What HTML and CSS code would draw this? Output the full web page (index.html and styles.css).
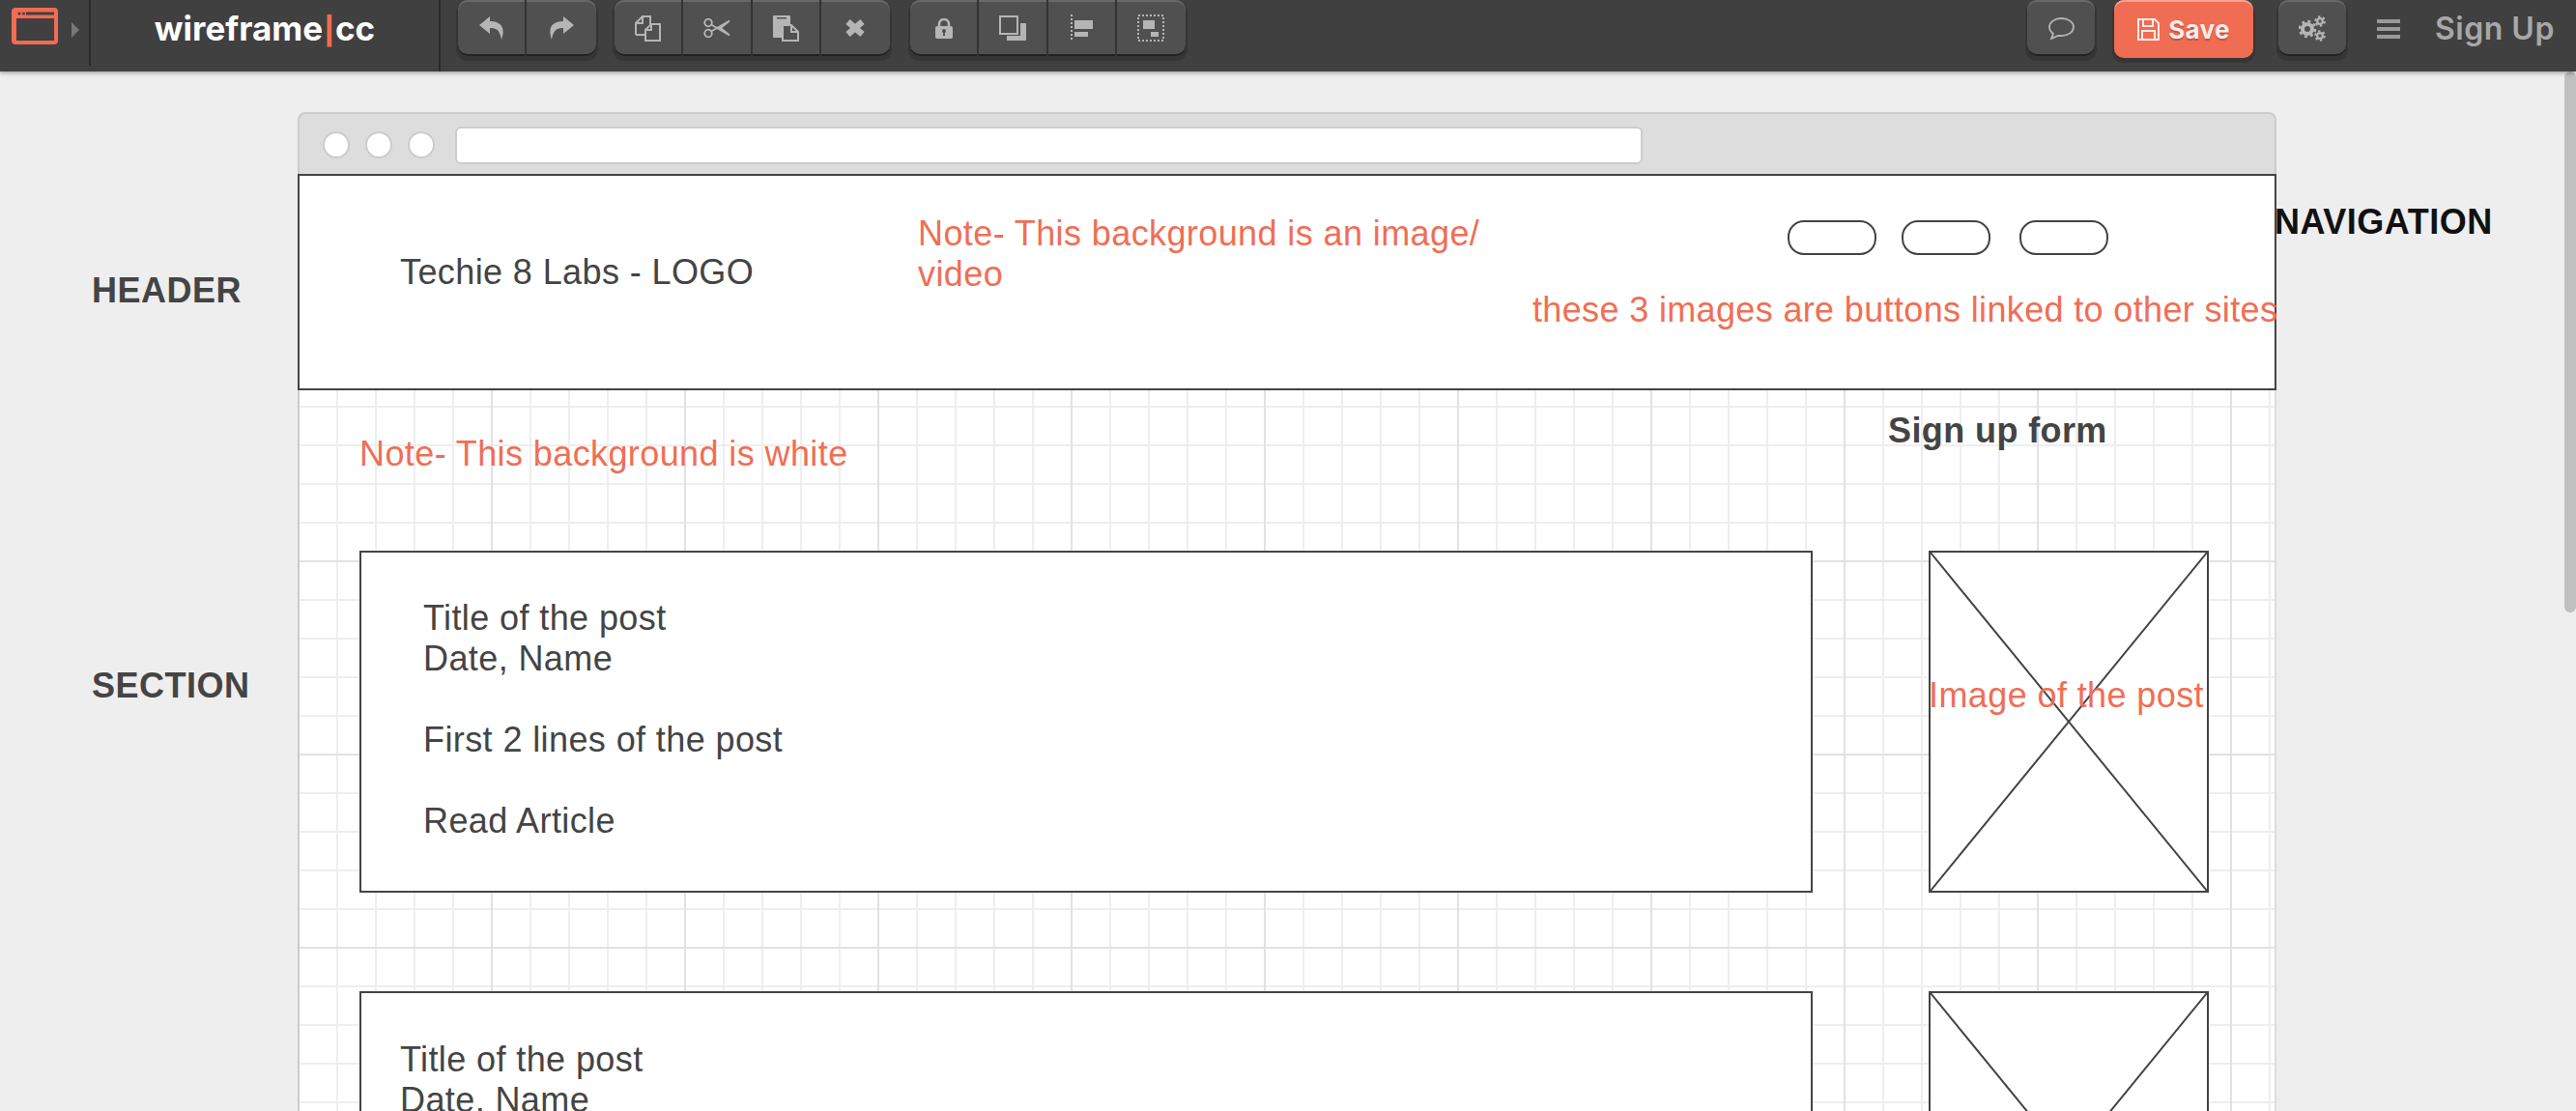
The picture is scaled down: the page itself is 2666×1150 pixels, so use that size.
FILE: index.html
```html
<!DOCTYPE html>
<html lang="en">
<head>
    <meta charset="UTF-8">
    <title>wireframe.cc</title>
    <link rel="stylesheet" href="styles.css">
</head>
<body>

    <!-- Top toolbar -->
    <header class="toolbar">
        <div class="logo-cell">
            <svg class="logo-icon" width="48" height="38" viewBox="0 0 48 38">
                <rect width="48" height="38" rx="4" fill="#f06c52"/>
                <circle cx="8" cy="6" r="1.6" fill="#404040"/>
                <circle cx="12.5" cy="6" r="1.6" fill="#404040"/>
                <rect x="15" y="4.5" width="29" height="3" fill="#404040"/>
                <rect x="5" y="11" width="39" height="23" fill="#404040"/>
            </svg>
            <span class="logo-caret"></span>
        </div>
        <div class="brand">wireframe<span class="brand-pipe">|</span>cc</div>

        <div class="btn-group first-group">
            <div class="btn">
                <svg width="26" height="24" viewBox="0 0 26 24"><path d="M11 0 0 9l11 9v-6c7-.5 10.500 3 12 12 4-11 1-19-12-19z" fill="#b5b5b5"/></svg>
            </div>
            <div class="btn">
                <svg width="26" height="24" viewBox="0 0 26 24"><path d="M15 0l11 9-11 9v-6C8 11.500 4.500 15 3 24-1 13 2 5 15 5z" fill="#b5b5b5"/></svg>
            </div>
        </div>

        <div class="btn-group edit-group">
            <div class="btn">
                <svg width="27" height="27" viewBox="0 0 27 27" fill="none" stroke="#b5b5b5" stroke-width="2"><path d="M1 20V8l7-7h8v8M8 1v7H1M1 20h10"/><path d="M11 26h15V9h-9l-6 6zM17 9v6h-6"/></svg>
            </div>
            <div class="btn">
                <svg width="28" height="20" viewBox="0 0 28 20" fill="none" stroke="#b5b5b5" stroke-width="1.800"><circle cx="5" cy="4.500" r="3.800"/><circle cx="5" cy="15.500" r="3.800"/><path d="M8 6.500l19 11-11-9M8 13.500l19-11-11 9"/></svg>
            </div>
            <div class="btn">
                <svg width="27" height="27" viewBox="0 0 27 27"><rect width="18" height="23" rx="1" fill="#b5b5b5"/><rect x="4" y="2" width="10" height="1.500" fill="#505050"/><path d="M10 10h9l7 7v9H10z" fill="#505050" stroke="#b5b5b5" stroke-width="2"/><path d="M19 10v7h7" fill="none" stroke="#b5b5b5" stroke-width="2"/></svg>
            </div>
            <div class="btn">
                <svg width="20" height="18" viewBox="0 0 20 18"><path d="M2.500 2.500l15 13M17.500 2.500l-15 13" stroke="#b5b5b5" stroke-width="6.500"/></svg>
            </div>
        </div>

        <div class="btn-group">
            <div class="btn">
                <svg width="18" height="21" viewBox="0 0 18 21"><path d="M4 9V6a5 5 0 0 1 10 0v3" fill="none" stroke="#b5b5b5" stroke-width="2.500"/><rect y="8" width="18" height="13" rx="2" fill="#b5b5b5"/><circle cx="9" cy="13" r="2" fill="#505050"/><rect x="8" y="13" width="2" height="5" fill="#505050"/></svg>
            </div>
            <div class="btn">
                <svg width="28" height="26" viewBox="0 0 28 26"><rect x="1" y="1" width="18" height="18" fill="none" stroke="#b5b5b5" stroke-width="2"/><path d="M22 8h6v18H8v-5h14z" fill="#b5b5b5"/></svg>
            </div>
            <div class="btn">
                <svg width="23" height="28" viewBox="0 0 23 28"><path d="M1 0v28" stroke="#b5b5b5" stroke-width="2" stroke-dasharray="2 2"/><rect x="4" y="6" width="19" height="9" fill="#b5b5b5"/><rect x="4" y="18" width="14" height="5" fill="#b5b5b5"/></svg>
            </div>
            <div class="btn">
                <svg width="28" height="28" viewBox="0 0 28 28"><rect x="1" y="1" width="26" height="26" fill="none" stroke="#b5b5b5" stroke-width="2" stroke-dasharray="2 2"/><rect x="6" y="6" width="12" height="9" fill="#b5b5b5"/><rect x="14" y="18" width="8" height="5" fill="#b5b5b5"/></svg>
            </div>
        </div>

        <div class="btn-group comment-group">
            <div class="btn">
                <svg width="27" height="23" viewBox="0 0 27 23"><path d="M13.500 1C6.500 1 1 5 1 10c0 3 1.500 5 4 7l-2 5 7-3h3.500C20.500 19 26 15 26 10S20.500 1 13.500 1z" fill="none" stroke="#b5b5b5" stroke-width="1.800"/></svg>
            </div>
        </div>
        <div class="save-btn">
            <svg width="23" height="23" viewBox="0 0 23 23" fill="none" stroke="#f6ece9" stroke-width="2"><path d="M1 1h17l4 4v17H1z"/><path d="M6 1v7h10V1M5 22v-9h13v9"/></svg>
            <span>Save</span>
        </div>
        <div class="btn-group settings-group">
            <div class="btn">
                <svg width="29" height="27" viewBox="0 0 29 27" fill="none" stroke="#b5b5b5">
                    <circle cx="9" cy="14" r="5" stroke-width="4"/>
                    <circle cx="9" cy="14" r="8" stroke-width="2.500" stroke-dasharray="3 3.300"/>
                    <circle cx="22" cy="6" r="2.800" stroke-width="2.200"/>
                    <circle cx="22" cy="6" r="4.800" stroke-width="2" stroke-dasharray="2.500 2.500"/>
                    <circle cx="22" cy="21" r="2.800" stroke-width="2.200"/>
                    <circle cx="22" cy="21" r="4.800" stroke-width="2" stroke-dasharray="2.500 2.500"/>
                </svg>
            </div>
        </div>
        <div class="hamburger"><span></span><span></span><span></span></div>
        <div class="signup">Sign Up</div>
    </header>

    <!-- Wireframe canvas -->
    <main class="canvas">
        <div class="browser">
            <div class="browser-bar">
                <span class="dot"></span>
                <span class="dot"></span>
                <span class="dot"></span>
                <span class="address"></span>
            </div>
            <div class="browser-page">
                <div class="page-header"></div>
            </div>
        </div>

        <div class="side-label label-header">HEADER</div>
        <div class="side-label label-section">SECTION</div>
        <div class="side-label label-nav">NAVIGATION</div>

        <div class="wire-text logo-text">Techie 8 Labs - LOGO</div>
        <div class="wire-text note note-bg">Note- This background is an image/<br>video</div>
        <div class="pill pill-1"></div>
        <div class="pill pill-2"></div>
        <div class="pill pill-3"></div>
        <div class="wire-text note note-buttons">these 3 images are buttons linked to other sites</div>

        <div class="wire-text note note-white">Note- This background is white</div>
        <div class="wire-text form-title">Sign up form</div>

        <div class="post post-1">
            <p>Title of the post<br>Date, Name</p>
            <p>First 2 lines of the post</p>
            <p>Read Article</p>
        </div>
        <div class="thumb thumb-1">
            <svg width="100%" height="100%" viewBox="0 0 100 100" preserveAspectRatio="none">
                <path d="M0 0l100 100M100 0L0 100" stroke="#444" stroke-width="2" vector-effect="non-scaling-stroke"/>
            </svg>
        </div>
        <div class="wire-text note note-image">Image of the post</div>

        <div class="post post-2">
            <p>Title of the post<br>Date, Name</p>
        </div>
        <div class="thumb thumb-2">
            <svg width="100%" height="100%" viewBox="0 0 100 100" preserveAspectRatio="none">
                <path d="M0 0l100 100M100 0L0 100" stroke="#444" stroke-width="2" vector-effect="non-scaling-stroke"/>
            </svg>
        </div>

        <div class="scroll-thumb"></div>
    </main>

</body>
</html>
```

FILE: styles.css
```css
/* Global Styles */
html, body {
    margin: 0;
    padding: 0;
    height: 1150px;
    overflow: hidden;
}

body {
    background-color: #eee;
    color: #444;
    font-family: "Liberation Sans", Arial, sans-serif;
}

/* Toolbar */
.toolbar {
    position: relative;
    z-index: 2;
    display: flex;
    height: 74px;
    background-color: #404040;
    box-shadow: 0 2px 4px rgba(0, 0, 0, 0.3);
    font-family: Inter, "Liberation Sans", sans-serif;
}

.logo-cell {
    display: flex;
    align-items: flex-start;
    box-sizing: border-box;
    width: 94px;
    height: 68px;
    padding: 8px 0 0 12px;
    border-right: 2px solid #2a2a2a;
}

.logo-caret {
    width: 0;
    height: 0;
    margin: 15px 0 0 14px;
    border-top: 8px solid transparent;
    border-bottom: 8px solid transparent;
    border-left: 8px solid #777;
}

.brand {
    box-sizing: border-box;
    width: 362px;
    padding-top: 8px;
    border-right: 2px solid #2a2a2a;
    color: #fff;
    font-size: 35px;
    font-weight: 700;
    line-height: 42px;
    letter-spacing: 0;
    text-align: center;
}

.brand-pipe {
    margin: 0 1px;
    color: #f06c52;
    font-size: 28px;
    font-weight: 800;
}

.btn-group {
    display: flex;
    height: 58px;
    margin-left: 21px;
    border-radius: 10px;
    background-color: #505050;
    box-shadow: inset 0 2px 0 #686868, inset 0 -2px 0 #222, 0 3px 0 2px #353535;
}

.first-group {
    margin-left: 18px;
}

.edit-group {
    margin-left: 19.500px;
}

.btn {
    display: flex;
    align-items: center;
    justify-content: center;
    width: 71.25px;
    border-right: 2px solid #333;
    box-sizing: border-box;
}

.btn:last-child {
    border-right: none;
}

.comment-group {
    margin-left: auto;
}

.save-btn {
    display: flex;
    align-items: center;
    justify-content: center;
    gap: 9px;
    width: 144px;
    height: 60px;
    margin-left: 20px;
    border-radius: 10px;
    background-color: #f06c52;
    box-shadow: inset 0 2px 0 #f9a28e, 0 3px 0 2px #353535;
    color: #f6ece9;
    font-size: 26px;
    font-weight: 700;
    letter-spacing: 0.3px;
    text-shadow: 0 2px 1px rgba(0, 0, 0, 0.2);
}

.settings-group {
    margin-left: 26px;
}

.settings-group .btn,
.comment-group .btn {
    width: 70px;
}

.hamburger {
    display: flex;
    flex-direction: column;
    gap: 4px;
    width: 24px;
    margin: 20px 0 0 32px;
}

.hamburger span {
    height: 4px;
    background-color: #999;
}

.signup {
    width: 123px;
    margin: 0 23px 0 36px;
    color: #a8a8a8;
    font-size: 32px;
    font-weight: 600;
    line-height: 60px;
    letter-spacing: 0.5px;
    white-space: nowrap;
}

/* Canvas */
.canvas {
    position: relative;
    height: 1076px;
    overflow: hidden;
}

.browser {
    position: absolute;
    left: 308px;
    top: 42px;
    bottom: 0;
    display: flex;
    flex-direction: column;
    width: 2048px;
}

.browser-bar {
    display: flex;
    align-items: center;
    box-sizing: border-box;
    height: 64px;
    padding: 2px 0 0 24px;
    border: 2px solid #ccc;
    border-bottom: none;
    border-radius: 8px 8px 0 0;
    background-color: #ddd;
}

.dot {
    box-sizing: border-box;
    width: 28px;
    height: 28px;
    margin-right: 16px;
    border: 2px solid #ccc;
    border-radius: 50%;
    background-color: #fff;
}

.address {
    box-sizing: border-box;
    width: 1229px;
    height: 39px;
    margin-left: 5px;
    border: 2px solid #ccc;
    border-radius: 6px;
    background-color: #fff;
}

.browser-page {
    flex: 1;
    box-sizing: border-box;
    border-left: 2px solid #ccc;
    border-right: 2px solid #ddd;
    background-color: #fff;
    background-image:
        linear-gradient(to right, #e2e2e2 2px, transparent 2px),
        linear-gradient(to bottom, #e2e2e2 2px, transparent 2px),
        linear-gradient(to right, #eee 2px, transparent 2px),
        linear-gradient(to bottom, #eee 2px, transparent 2px);
    background-size: 200px 200px, 200px 200px, 40px 40px, 40px 40px;
    background-origin: border-box;
}

.page-header {
    box-sizing: border-box;
    height: 224px;
    margin: 0 -2px;
    border: 2px solid #444;
    background-color: #fff;
}

/* Things placed on the wireframe */
.side-label,
.wire-text {
    position: absolute;
    font-size: 36px;
    line-height: 42px;
    letter-spacing: 0.4px;
    white-space: nowrap;
}

.side-label {
    font-weight: 700;
    letter-spacing: 0.5px;
}

.label-header { left: 95px; top: 206px; }
.label-section { left: 95px; top: 615px; }
.label-nav { left: 2354px; top: 135px; color: #111; }

.note {
    color: #f06e55;
}

.logo-text { left: 414px; top: 187px; }
.note-bg { left: 950px; top: 147px; }
.note-buttons { left: 1586px; top: 226px; letter-spacing: 0.35px; }
.note-white { left: 372px; top: 375px; }
.form-title { left: 1954px; top: 351px; font-weight: 700; }
.note-image { left: 1996px; top: 625px; }

.pill {
    position: absolute;
    top: 154px;
    box-sizing: border-box;
    width: 92px;
    height: 36px;
    border: 2px solid #444;
    border-radius: 17px;
    background-color: #fff;
}

.pill-1 { left: 1850px; }
.pill-2 { left: 1968px; }
.pill-3 { left: 2090px; }

.post {
    position: absolute;
    left: 372px;
    box-sizing: border-box;
    width: 1504px;
    height: 354px;
    border: 2px solid #444;
    background-color: #fff;
    font-size: 36px;
    line-height: 42px;
    letter-spacing: 0.4px;
}

.post p {
    margin: 0 0 42px;
}

.post-1 { top: 496px; padding: 47px 0 0 64px; }
.post-2 { top: 952px; padding: 48px 0 0 40px; }

.thumb {
    position: absolute;
    left: 1996px;
    box-sizing: border-box;
    width: 290px;
    height: 354px;
    border: 2px solid #444;
    background-color: #fff;
}

.thumb svg {
    display: block;
}

.thumb-1 { top: 496px; }
.thumb-2 { top: 952px; }

.scroll-thumb {
    position: absolute;
    right: 0;
    top: 0;
    width: 12px;
    height: 560px;
    border-radius: 6px;
    background-color: #c0c0c0;
}
```
